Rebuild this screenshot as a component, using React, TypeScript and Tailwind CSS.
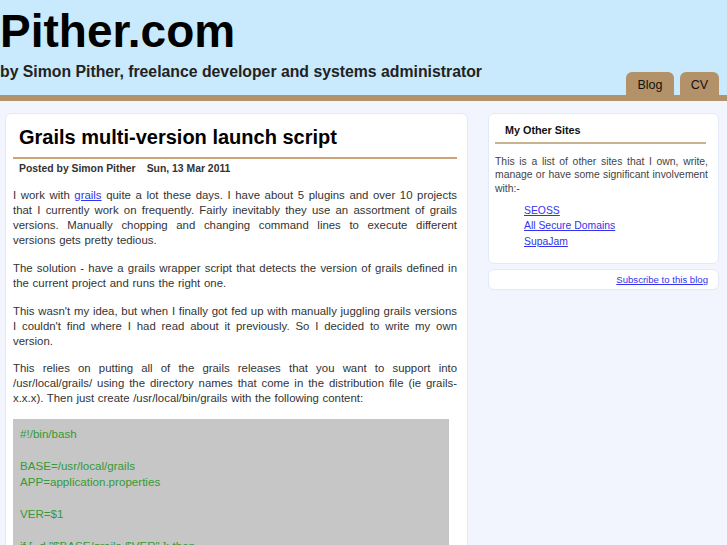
import React from "react";

const code = `#!/bin/bash

BASE=/usr/local/grails
APP=application.properties

VER=$1

if [ -d "$BASE/grails-$VER" ]; then
    shift
else
    VER=\`grep app.grails.version $APP | sed -E 's/.*=(.*)/\\1/'\`
fi

export GRAILS_HOME="$BASE/grails-$VER"
$GRAILS_HOME/bin/grails "$@"`;

export default function App() {
  return (
    <div
      className="min-h-screen bg-[#f3f5fe] text-[#333]"
      style={{ fontFamily: '"Liberation Sans", Arial, sans-serif' }}
    >
      {/* Header */}
      <div className="flex h-[95px] items-end justify-between bg-[#c9eafc]">
        <div className="self-start">
          <h1 className="pt-[8px] text-[46px] font-bold leading-[46px] text-black">
            Pither.com
          </h1>
          <p className="mt-[8px] text-[15.8px] font-bold leading-[20px] text-[#222]">
            by Simon Pither, freelance developer and systems administrator
          </p>
        </div>
        <div className="mr-[8px] flex gap-[6px]">
          <a className="flex h-[23px] w-[48px] items-center justify-center rounded-t-[6px] bg-[#b39269] pt-[4px] text-[12.5px] text-[#111]">
            Blog
          </a>
          <a className="flex h-[23px] w-[39px] items-center justify-center rounded-t-[6px] bg-[#b39269] pt-[4px] text-[12.5px] text-[#111]">
            CV
          </a>
        </div>
      </div>
      <div className="h-[6px] bg-[#b39269]" />

      {/* Body */}
      <div className="flex items-start gap-[20px] pl-[5px] pr-[8px] pt-[12px]">
        {/* Main card */}
        <div className="w-[463px] shrink-0 rounded-[6px] border border-[#e2e9fa] bg-white pb-[20px] pl-[7px] pr-[10px] pt-[11px]">
          <h2 className="border-b-2 border-[#cfa47a] pb-[8px] pl-[6px] text-[20px] font-bold leading-[24px] text-black">
            Grails multi-version launch script
          </h2>
          <div className="mt-[3px] pl-[6px] text-[10.4px] font-bold leading-[13px] text-[#333]">
            <span>Posted by Simon Pither</span>
            <span className="ml-[11px]">Sun, 13 Mar 2011</span>
          </div>

          <div className="text-justify text-[11.4px] leading-[15px] text-[#333]">
            <p className="mt-[13px] [word-spacing:0.6px]">
              I work with{" "}
              <a className="text-[#3333ee] underline">grails</a> quite a lot
              these days. I have about 5 plugins and over 10 projects that I
              currently work on frequently. Fairly inevitably they use an
              assortment of grails versions. Manually chopping and changing
              command lines to execute different versions gets pretty tedious.
            </p>
            <p className="mt-[13px] [word-spacing:0.6px]">
              The solution - have a grails wrapper script that detects the
              version of grails defined in the current project and runs the
              right one.
            </p>
            <p className="mt-[13px] [word-spacing:0.3px]">
              This wasn't my idea, but when I finally got fed up with manually
              juggling grails versions I couldn't find where I had read about it
              previously. So I decided to write my own version.
            </p>
            <p className="mt-[12px] [word-spacing:0.5px]">
              This relies on putting all of the grails releases that you want to
              support into /usr/local/grails/ using the directory names that
              come in the distribution file (ie grails-x.x.x). Then just create
              /usr/local/bin/grails with the following content:
            </p>
          </div>

          <div className="mr-[8px] mt-[13px] whitespace-pre bg-[#c6c6c6] px-[7px] py-[7px] text-[11.6px] leading-[16px] text-[#359935]">
            {code}
          </div>
        </div>

        {/* Sidebar */}
        <div className="flex w-[231px] shrink-0 flex-col gap-[5px]">
          <div className="rounded-[6px] border border-[#e2e9fa] bg-white pb-[14px] pl-[6px] pr-[10px] pt-[10px]">
            <h3 className="mr-[2px] border-b-2 border-[#c9b28f] pb-[5px] pl-[10px] text-[10.8px] font-bold leading-[13px] text-[#111]">
              My Other Sites
            </h3>
            <p className="mt-[11px] text-justify text-[10.4px] leading-[13.3px] text-[#444]">
              This is a list of other sites that I own, write, manage or have
              some significant involvement with:-
            </p>
            <ul className="mt-[8px] pl-[29px] text-[10.4px] leading-[15.5px]">
              <li>
                <a className="text-[#3333ee] underline">SEOSS</a>
              </li>
              <li>
                <a className="text-[#3333ee] underline">All Secure Domains</a>
              </li>
              <li>
                <a className="text-[#3333ee] underline">SupaJam</a>
              </li>
            </ul>
          </div>
          <div className="flex h-[21px] items-center justify-end rounded-[6px] border border-[#e2e9fa] bg-white pr-[10px]">
            <a className="text-[9.6px] leading-[12px] text-[#3333ee] underline">
              Subscribe to this blog
            </a>
          </div>
        </div>
      </div>
    </div>
  );
}
